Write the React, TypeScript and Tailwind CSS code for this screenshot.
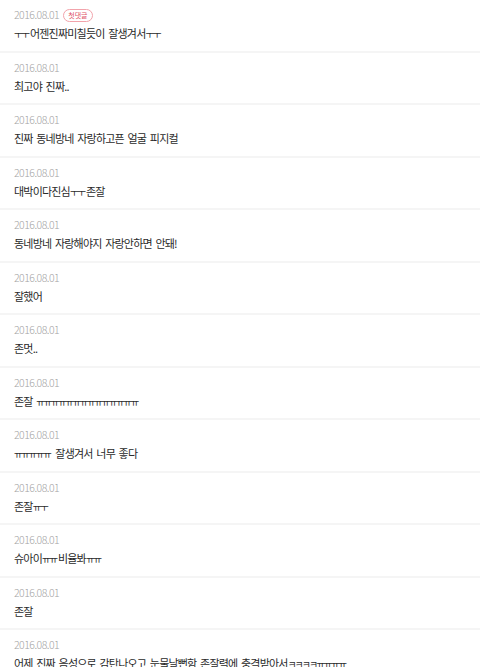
const comments: { date: string; text: string; first?: boolean }[] = [
  { date: '2016.08.01', text: 'ㅜㅜ어젠진짜미칠듯이 잘생겨서ㅜㅜ', first: true },
  { date: '2016.08.01', text: '최고야 진짜..' },
  { date: '2016.08.01', text: '진짜 동네방네 자랑하고픈 얼굴 피지컬' },
  { date: '2016.08.01', text: '대박이다진심ㅜㅜ존잘' },
  { date: '2016.08.01', text: '동네방네 자랑해야지 자랑안하면 안돼!' },
  { date: '2016.08.01', text: '잘했어' },
  { date: '2016.08.01', text: '존멋..' },
  { date: '2016.08.01', text: '존잘 ㅠㅠㅠㅠㅠㅠㅠㅠㅠㅠㅠㅠㅠㅠ' },
  { date: '2016.08.01', text: 'ㅠㅠㅠㅠㅠ 잘생겨서 너무 좋다' },
  { date: '2016.08.01', text: '존잘ㅠㅜ' },
  { date: '2016.08.01', text: '슈아이ㅠㅠ비율봐ㅠㅠ' },
  { date: '2016.08.01', text: '존잘' },
  { date: '2016.08.01', text: '어제 진짜 음성으로 감탄나오고 눈물날뻔함 존잘력에 충격받아서ㅋㅋㅋㅋㅠㅠㅠㅠ' },
]

// jamo like ㅠ ㅜ ㅋ are full-width in Noto CJK, the original font sets them narrower
function splitJamo(text: string) {
  return text.split(/([\u3131-\u318E]+)/).filter(Boolean)
}

function CommentRow({ date, text, first }: { date: string; text: string; first?: boolean }) {
  return (
    <li className="pl-[14px] pr-[14px] pt-[9px] pb-[9.5px] border-b-2 border-[#f5f5f5]">
      <div className="flex items-center h-[12px]">
        <span className="text-[10.5px] leading-[12px] font-light text-[#a3a3a3] tracking-[-0.5px]">{date}</span>
        {first && (
          <span className="ml-[4px] inline-flex items-center h-[13px] px-[4px] rounded-full border border-[#f2a3ab] text-[7px] leading-none text-[#e0566a]">
            첫댓글
          </span>
        )}
      </div>
      <p className="mt-[4px] h-[16px] text-[11px] leading-[16px] text-[#2a2a2a] whitespace-nowrap tracking-[-0.8px] [word-spacing:2px]">
        {splitJamo(text).map((part, i) =>
          /^[\u3131-\u318E]+$/.test(part)
            ? <span key={i} className="text-[9.5px] leading-none tracking-[-1.5px] pr-[1.5px]">{part}</span>
            : <span key={i}>{part}</span>
        )}
      </p>
    </li>
  )
}

export default function App() {
  return (
    <div
      className="w-[480px] h-[667px] overflow-hidden bg-white"
      style={{ fontFamily: '"Noto Sans CJK KR", "Noto Sans", sans-serif' }}
    >
      <ul>
        {comments.map((c, i) => (
          <CommentRow key={i} {...c} />
        ))}
      </ul>
    </div>
  )
}
